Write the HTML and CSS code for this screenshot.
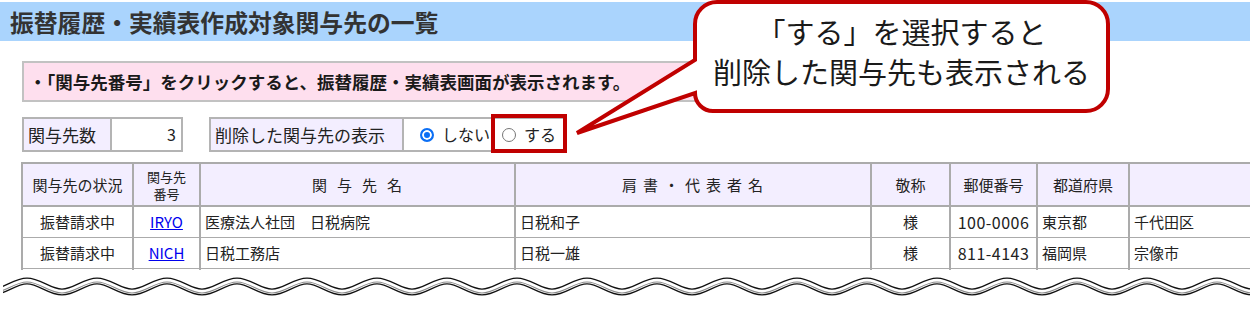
FILE: index.html
```html
<!DOCTYPE html>
<html lang="ja">
<head>
    <meta charset="UTF-8">
    <title>振替履歴・実績表作成対象関与先の一覧</title>
    <link rel="stylesheet" href="styles.css">
</head>
<body>
    <h1 class="title">振替履歴・実績表作成対象関与先の一覧</h1>

    <div class="notice">・「関与先番号」をクリックすると、振替履歴・実績表画面が表示されます。</div>

    <div class="controls">
        <div class="box">
            <div class="lbl count-lbl">関与先数</div>
            <div class="count-val">3</div>
        </div>
        <div class="box">
            <div class="lbl">削除した関与先の表示</div>
            <div class="radios">
                <span class="radio on"></span><span class="rtext">しない</span>
                <span class="radio"></span><span class="rtext">する</span>
            </div>
        </div>
    </div>

    <div class="tablewrap">
        <table class="list">
            <colgroup>
                <col style="width:111px">
                <col style="width:67px">
                <col style="width:315px">
                <col style="width:356px">
                <col style="width:79px">
                <col style="width:87px">
                <col style="width:92px">
                <col style="width:193px">
            </colgroup>
            <tr>
                <th>関与先の状況</th>
                <th class="small">関与先<br>番号</th>
                <th class="wide">関与先名</th>
                <th class="wide2">肩書・代表者名</th>
                <th>敬称</th>
                <th>郵便番号</th>
                <th>都道府県</th>
                <th></th>
            </tr>
            <tr>
                <td class="c">振替請求中</td>
                <td class="c"><a href="#">IRYO</a></td>
                <td>医療法人社団　日税病院</td>
                <td>日税和子</td>
                <td class="c">様</td>
                <td class="c num">100-0006</td>
                <td>東京都</td>
                <td>千代田区</td>
            </tr>
            <tr>
                <td class="c">振替請求中</td>
                <td class="c"><a href="#">NICH</a></td>
                <td>日税工務店</td>
                <td>日税一雄</td>
                <td class="c">様</td>
                <td class="c num">811-4143</td>
                <td>福岡県</td>
                <td>宗像市</td>
            </tr>
            <tr>
                <td></td><td></td><td></td><td></td><td></td><td></td><td></td><td></td>
            </tr>
        </table>
    </div>

    <!-- cut line -->
    <svg class="wave" width="1250" height="43">
        <defs>
            <pattern id="wv" patternUnits="userSpaceOnUse" x="97" y="0" width="70" height="43">
                <path d="M -35 22 C -22.4 22 -12.6 11 0 11 S 22.4 22 35 22 S 57.4 11 70 11 S 92.4 22 105 22" fill="none" stroke="#111" stroke-width="7"/>
                <path d="M -35 22 C -22.4 22 -12.6 11 0 11 S 22.4 22 35 22 S 57.4 11 70 11 S 92.4 22 105 22" fill="none" stroke="#fff" stroke-width="4.5"/>
                <path d="M -35 23 C -22.4 23 -12.6 12 0 12 S 22.4 23 35 23 S 57.4 12 70 12 S 92.4 23 105 23" fill="none" stroke="#8a8a8a" stroke-width="1.2"/>
            </pattern>
        </defs>
        <rect x="3" y="0" width="1247" height="43" fill="url(#wv)"/>
    </svg>

    <!-- annotation -->
    <div class="mark"></div>
    <svg class="balloon" width="1250" height="140">
        <path d="M 717 2 H 1086 A 22 22 0 0 1 1108 24 V 89 A 22 22 0 0 1 1086 111 H 713 A 18 18 0 0 1 695 93 L 577 133 L 695 60 V 24 A 22 22 0 0 1 717 2 Z"
              fill="#fff" stroke="#c00000" stroke-width="4" stroke-linejoin="miter"/>
    </svg>
    <div class="balloon-text">「する」を選択すると<br>削除した関与先も表示される</div>
</body>
</html>
```

FILE: styles.css
```css
*{
    box-sizing: border-box;
}

body{
    margin: 0;
    width: 1250px;
    height: 313px;
    overflow: hidden;
    position: relative;
    background-color: #fff;
    color: #222;
    font-family: "Noto Sans CJK JP", "Noto Sans", sans-serif;
}

.title {
    margin: 2px 0 0 0;
    height: 39px;
    padding-left: 10px;
    background-color: #aad4fd;
    color: #333;
    font-size: 23.8px;
    font-weight: bold;
    line-height: 39px;
}

.notice {
    margin: 20px 0 0 22px;
    width: 740px;
    height: 41px;
    padding-left: 5px;
    background-color: #fedfee;
    border: 2px solid #c2c2c2;
    font-size: 17.5px;
    font-weight: bold;
    line-height: 37px;
    color: #1a1a1a;
    white-space: nowrap;
}

.controls {
    display: flex;
    gap: 26px;
    margin: 15px 0 0 22px;
    height: 35px;
}
.box {
    display: flex;
    height: 35px;
    border: 2px solid #b4b4b4;
    font-size: 16px;
    line-height: 31px;
    white-space: nowrap;
}
.lbl {
    background-color: #f3eeff;
    border-right: 2px solid #b4b4b4;
    padding: 0 17px 0 4px;
    font-size: 17px;
}
.lbl.count-lbl {
    width: 88px;
    padding-right: 0;
}
.count-val {
    width: 69px;
    text-align: right;
    padding-right: 5px;
}
.radios {
    display: flex;
    align-items: center;
    padding: 0 8px 0 16px;
}
.radio {
    width: 14px;
    height: 14px;
    border-radius: 50%;
    border: 1px solid #767676;
    background-color: #fff;
}
.radio.on {
    border: 2px solid #0b6ff5;
    box-shadow: inset 0 0 0 2px #fff;
    background-color: #0b6ff5;
}
.rtext {
    margin: 0 12px 0 8px;
}
.rtext:last-child {
    margin-right: 0;
}

.tablewrap {
    margin: 10px 0 0 21px;
    height: 108px;
    overflow: hidden;
}
.list {
    width: 1300px;
    table-layout: fixed;
    border-collapse: collapse;
    font-size: 15px;
}
.list th {
    height: 43px;
    background-color: #f3eeff;
    font-weight: normal;
    border: 2px solid #ababab;
    line-height: 20px;
}
.list th.small {
    font-size: 13px;
    line-height: 17px;
}
.list th.wide {
    letter-spacing: 10px;
    padding-left: 10px;
}
.list th.wide2 {
    letter-spacing: 6px;
    padding-left: 6px;
}
.list td {
    height: 31px;
    padding: 0 4px;
    border-left: 2px solid #ababab;
    border-right: 2px solid #ababab;
    border-top: 1px solid #ababab;
    border-bottom: 1px solid #ababab;
    white-space: nowrap;
}
.list td.c {
    text-align: center;
}
.list td.num {
    font-size: 16px;
    letter-spacing: 0.5px;
}
.list a {
    color: #0000ee;
}

.wave {
    display: block;
}

.mark {
    position: absolute;
    left: 491px;
    top: 114px;
    width: 76px;
    height: 39px;
    border: 4px solid #c00000;
}
.balloon {
    position: absolute;
    left: 0;
    top: 0;
}
.balloon-text {
    position: absolute;
    left: 695px;
    top: 11px;
    width: 413px;
    text-align: center;
    font-size: 29px;
    line-height: 40px;
    color: #1a1a1a;
}
```
